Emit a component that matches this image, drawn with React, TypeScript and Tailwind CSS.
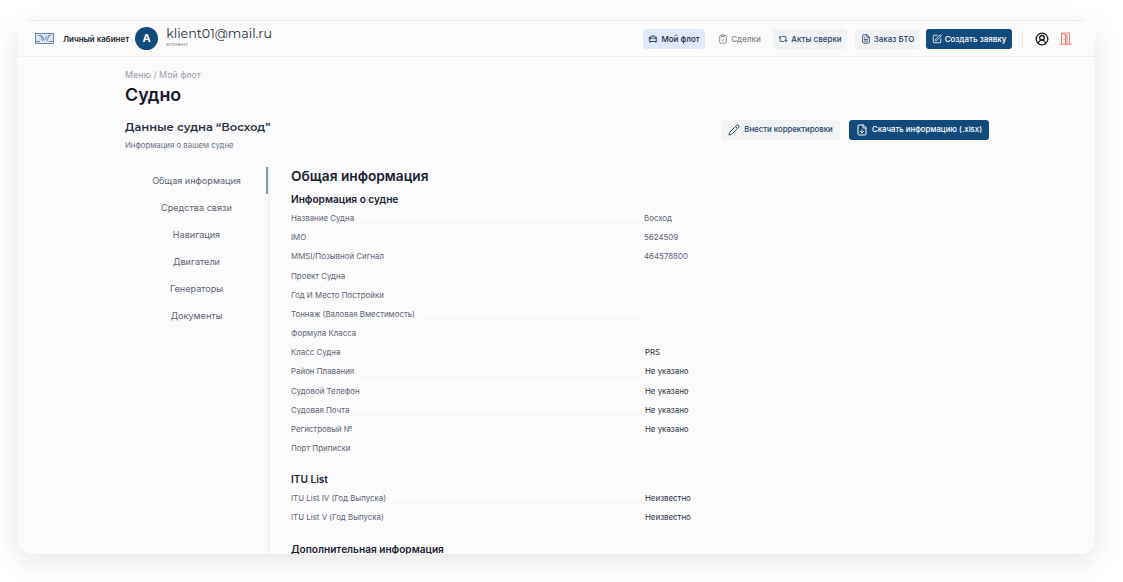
import React from "react";
import { Pencil, FileDown, CarFront, ClipboardCheck, Repeat2, FileText, SquarePen, CircleUserRound } from "lucide-react";

const rows: [string, string, boolean][] = [
  ["Название Судна", "Восход", true],
  ["IMO", "5624509", true],
  ["MMSI/Позывной Сигнал", "464578800", true],
  ["Проект Судна", "", false],
  ["Год И Место Постройки", "", false],
  ["Тоннаж (Валовая Вместимость)", "", false],
  ["Формула Класса", "", false],
  ["Класс Судна", "PRS", false],
  ["Район Плавания", "Не указано", false],
  ["Судовой Телефон", "Не указано", false],
  ["Судовая Почта", "Не указано", false],
  ["Регистровый №", "Не указано", false],
  ["Порт Приписки", "", false],
];
const itu: [string, string][] = [["ITU List IV (Год Выпуска)", "Неизвестно"], ["ITU List V (Год Выпуска)", "Неизвестно"]];
const nav = ["Общая информация", "Средства связи", "Навигация", "Двигатели", "Генераторы", "Документы"];

function Row({ label, value, light }: { label: string; value: string; light?: boolean }) {
  return (
    <div className="flex h-[19.17px] items-end">
      <div className="flex w-[349px] items-end">
        <span className="text-[7.9px] leading-[14px] whitespace-nowrap text-[#5b6472]">{label}</span>
        <span className="ml-[3px] mb-[1px] flex-1 border-b border-[#f5f5f6]" />
      </div>
      <span className={light ? "ml-[4px] text-[7.9px] leading-[14px] text-[#5b6472]" : "ml-[5px] text-[7.9px] leading-[14px] text-[#2a3240]"}>{value}</span>
    </div>
  );
}

function Logo() {
  return (
    <svg width="19" height="11" viewBox="0 0 19 11" fill="none" stroke="#40608a" strokeWidth="0.7">
      <rect x="0.4" y="0.4" width="18" height="10" fill="#dbe6f2" />
      <path d="M3 2.5h3l1.5 5.5M12 8l2-5.5h2M7 3l2.5 4.5L12 3M1 8.5h4M14 8.5h4" />
    </svg>
  );
}

function Exit() {
  return (
    <svg width="13" height="13" viewBox="0 0 13 13" fill="none" stroke="#ee7f6f" strokeWidth="1">
      <path d="M0.5 12.2h12M2.5 12.2V1h8v11.2M3 1l3.5 2v9.2M6.5 3h1.5v9.2M5 6.5v1.5" />
    </svg>
  );
}

export default function App() {
  return (
    <div className="h-[582px] w-[1123px] overflow-hidden bg-white font-['Inter','Liberation_Sans',sans-serif] text-[#111827]">
      <div className="pl-[18px] pt-[20px]">
        <div className="h-[534px] w-[1077px] overflow-hidden rounded-[14px] bg-[#fbfbfc] shadow-[0_8px_26px_rgba(0,0,0,0.10)]">
          <header className="flex h-[37px] items-center border-b border-t border-[#eceded] pl-[17px] pr-[23px]">
            <Logo />
            <span className="ml-[9px] whitespace-nowrap text-[8px] font-semibold text-[#1a1f2a]">Личный кабинет</span>
            <span className="ml-[6px] flex h-[23px] w-[23px] items-center justify-center rounded-full bg-[#134a7c] text-[11px] font-bold text-white">A</span>
            <div className="ml-[8px] -mt-[3px] flex flex-col font-['Montserrat','Open_Sans',sans-serif]">
              <span className="text-[12.7px] leading-[14px] text-[#222b38]">klient01@mail.ru</span>
              <span className="text-[6px] leading-[6px] text-[#6b7280]">клиент</span>
            </div>
            <nav className="ml-auto flex items-center whitespace-nowrap text-[8px] font-medium">
              <span className="flex h-[20px] w-[62px] items-center justify-center gap-[3px] rounded-[3px] bg-[#e0e8fa] text-[#1f2a3a]"><CarFront size={10} />Мой флот</span>
              <span className="ml-[9px] flex h-[20px] w-[51px] items-center justify-center gap-[3px] text-[#7d838d]"><ClipboardCheck size={10} />Сделки</span>
              <span className="ml-[8px] flex h-[20px] w-[74px] items-center justify-center gap-[3px] rounded-[3px] bg-[#f1f2f3] text-[#1f4468]"><Repeat2 size={10} />Акты сверки</span>
              <span className="ml-[8px] flex h-[20px] w-[65px] items-center justify-center gap-[3px] rounded-[3px] bg-[#f1f2f3] text-[#1f4468]"><FileText size={10} />Заказ БТО</span>
              <span className="ml-[6px] flex h-[20px] w-[86px] items-center justify-center gap-[3px] rounded-[3px] bg-[#134a7c] text-white"><SquarePen size={10} />Создать заявку</span>
              <span className="ml-[10px] h-[18px] w-px bg-[#e8e9ea]" />
              <CircleUserRound className="ml-[12px] text-[#15181e]" size={14} strokeWidth={2.2} />
              <span className="ml-[10px] flex"><Exit /></span>
            </nav>
          </header>
          <main className="pl-[107px]">
            <div className="pt-[12px] text-[8.9px] leading-[12px] text-[#9a9ea6]">Меню / Мой флот</div>
            <h1 className="mt-[2px] text-[17.8px] font-semibold leading-[24px] text-[#111827]">Судно</h1>
            <div className="mt-[13px] flex h-[37px] items-start">
              <div>
                <div className="font-['Montserrat','Open_Sans',sans-serif] text-[11.5px] font-semibold leading-[15px] text-[#2a3240]">Данные судна “Восход”</div>
                <div className="mt-[5px] text-[7.8px] leading-[11px] text-[#6b7280]">Информация о вашем судне</div>
              </div>
              <div className="ml-auto mr-[106px] flex gap-[9px] whitespace-nowrap text-[7.8px] font-medium">
                <span className="flex h-[20px] w-[119px] items-center justify-center gap-[4px] rounded-[3px] bg-[#f1f2f3] text-[#1f4468]"><Pencil size={12} />Внести корректировки</span>
                <span className="flex h-[20px] w-[140px] items-center justify-center gap-[4px] rounded-[3px] bg-[#134a7c] text-white"><FileDown size={12} />Скачать информацию (.xlsx)</span>
              </div>
            </div>
            <div className="mt-[10px] flex">
              <aside className="flex h-[390px] w-[144px] flex-col border-r border-[#eceded]">
                {nav.map((n, i) => (
                  <div key={n} className="relative flex h-[27px] items-center justify-center text-[9.1px] text-[#5b6472]">
                    {n}
                    {i === 0 && <span className="absolute right-0 top-0 h-[27px] w-[2px] bg-[#7e9ab8]" />}
                  </div>
                ))}
              </aside>
              <section className="pl-[22px]">
                <h2 className="pt-[1px] text-[13.7px] font-semibold leading-[16px] text-[#1a2130]">Общая информация</h2>
                <h3 className="mt-[8px] text-[10.1px] font-semibold leading-[14px] text-[#1a2130]">Информация о судне</h3>
                <div>
                  {rows.map((r) => <Row key={r[0]} label={r[0]} value={r[1]} light={r[2]} />)}
                </div>
                <h3 className="mt-[17px] text-[10.1px] font-semibold leading-[14px] text-[#1a2130]">ITU List</h3>
                <div>
                  {itu.map((r) => <Row key={r[0]} label={r[0]} value={r[1]} />)}
                </div>
                <h3 className="mt-[18px] text-[10.1px] font-semibold leading-[14px] text-[#1a2130]">Дополнительная информация</h3>
              </section>
            </div>
          </main>
        </div>
      </div>
    </div>
  );
}
